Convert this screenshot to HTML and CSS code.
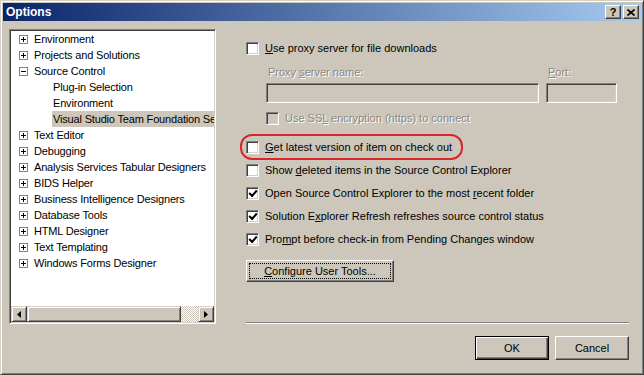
FILE: index.html
```html
<!DOCTYPE html>
<html lang="en">
<head>
    <meta charset="UTF-8">
    <title>Options</title>
    <link rel="stylesheet" href="styles.css">
</head>
<body>
    <div class="window">
        <div class="titlebar">
            <span class="title">Options</span>
            <div class="caption-btns">
                <span class="cap-btn help">?</span>
                <span class="cap-btn">
                    <svg width="8" height="7" viewBox="0 0 8 7"><path d="M0.5 0.5 L7.5 6.5 M7.5 0.5 L0.5 6.5" stroke="#000" stroke-width="1.6"/></svg>
                </span>
            </div>
        </div>

        <div class="main">
            <div class="tree">
                <ul class="tree-list">
                    <li class="node"><span class="tog plus"></span>Environment</li>
                    <li class="node"><span class="tog plus"></span>Projects and Solutions</li>
                    <li class="node"><span class="tog"></span>Source Control</li>
                    <li class="node child">Plug-in Selection</li>
                    <li class="node child">Environment</li>
                    <li class="node child selected"><span class="sel">Visual Studio Team Foundation Server</span></li>
                    <li class="node"><span class="tog plus"></span>Text Editor</li>
                    <li class="node"><span class="tog plus"></span>Debugging</li>
                    <li class="node"><span class="tog plus"></span>Analysis Services Tabular Designers</li>
                    <li class="node"><span class="tog plus"></span>BIDS Helper</li>
                    <li class="node"><span class="tog plus"></span>Business Intelligence Designers</li>
                    <li class="node"><span class="tog plus"></span>Database Tools</li>
                    <li class="node"><span class="tog plus"></span>HTML Designer</li>
                    <li class="node"><span class="tog plus"></span>Text Templating</li>
                    <li class="node"><span class="tog plus"></span>Windows Forms Designer</li>
                </ul>
                <div class="hscroll">
                    <span class="sb-btn">
                        <svg width="4" height="7" viewBox="0 0 4 7"><path d="M4 0 L0 3.5 L4 7 Z" fill="#000"/></svg>
                    </span>
                    <span class="sb-thumb"></span>
                    <span class="sb-track"></span>
                    <span class="sb-btn">
                        <svg width="4" height="7" viewBox="0 0 4 7"><path d="M0 0 L4 3.5 L0 7 Z" fill="#000"/></svg>
                    </span>
                </div>
            </div>

            <div class="settings">
                <div class="check-row proxy-row">
                    <span class="box"></span>
                    <span><u>U</u>se proxy server for file downloads</span>
                </div>

                <div class="proxy-fields">
                    <label class="disabled">Proxy <u>s</u>erver name:</label>
                    <label class="disabled"><u>P</u>ort:</label>
                    <span class="field"></span>
                    <span class="field"></span>
                </div>

                <div class="check-row ssl-row">
                    <span class="box off"></span>
                    <span class="disabled">Use SS<u>L</u> encryption (https) to connect</span>
                </div>

                <div class="check-row first-opt marked">
                    <span class="box"></span>
                    <span><u>G</u>et latest version of item on check out</span>
                </div>
                <div class="check-row">
                    <span class="box"></span>
                    <span>Show <u>d</u>eleted items in the Source Control Explorer</span>
                </div>
                <div class="check-row">
                    <span class="box checked"></span>
                    <span>Open Source Control Explorer to the most <u>r</u>ecent folder</span>
                </div>
                <div class="check-row">
                    <span class="box checked"></span>
                    <span>Solution E<u>x</u>plorer Refresh refreshes source control status</span>
                </div>
                <div class="check-row">
                    <span class="box checked"></span>
                    <span>Pro<u>m</u>pt before check-in from Pending Changes window</span>
                </div>

                <button class="btn tools-btn"><span class="focus"><u>C</u>onfigure User Tools...</span></button>

                <div class="sep"></div>
            </div>
        </div>

        <div class="actions">
            <button class="btn default">OK</button>
            <button class="btn">Cancel</button>
        </div>
    </div>
</body>
</html>
```

FILE: styles.css
```css
* {
    box-sizing: border-box;
}
body {
    margin: 0;
    font-family: "Liberation Sans", Arial, sans-serif;
    font-size: 11px;
    color: #000;
    background-color: #cdc7bb;
}
.window {
    width: 644px;
    height: 375px;
    display: flex;
    flex-direction: column;
    background-color: #cdc7bb;
    border: 1px solid;
    border-color: #d4d0c8 #404040 #404040 #d4d0c8;
    box-shadow: inset 1px 1px #fff, inset -1px -1px #808080;
    padding: 2px;
}
.titlebar {
    height: 18px;
    display: flex;
    align-items: center;
    justify-content: space-between;
    padding: 0 2px 0 3px;
    background: linear-gradient(to right, #0a246a, #a6caf0);
}
.title {
    color: #fff;
    font-weight: bold;
    font-size: 12px;
}
.caption-btns {
    display: flex;
    gap: 2px;
}
.cap-btn {
    width: 16px;
    height: 14px;
    display: flex;
    align-items: center;
    justify-content: center;
    background-color: #cdc7bb;
    border: 1px solid;
    border-color: #fff #404040 #404040 #fff;
    box-shadow: inset -1px -1px #808080;
}
.help {
    font-weight: bold;
    font-size: 11px;
    line-height: 1;
}

/* left tree */
.main {
    display: flex;
    padding: 8px 12px 0 6px;
}
.tree {
    width: 207px;
    height: 295px;
    display: flex;
    flex-direction: column;
    background-color: #fff;
    border: 1px solid;
    border-color: #808080 #fff #fff #808080;
    box-shadow: inset 1px 1px #404040, inset -1px -1px #d4d0c8;
    padding: 1px;
}
.tree-list {
    list-style: none;
    margin: 0;
    padding: 0;
    flex: 1;
    overflow: hidden;
    letter-spacing: -0.17px;
}
.node {
    height: 16px;
    display: flex;
    align-items: center;
    gap: 6px;
    padding-left: 8px;
    white-space: nowrap;
}
.node.child {
    padding-left: 42px;
}
.node.selected {
    padding-left: 41px;
}
.sel {
    flex: 1;
    height: 16px;
    line-height: 16px;
    padding-left: 1px;
    overflow: hidden;
    background-color: #cdc7bb;
}
.tog {
    width: 9px;
    height: 9px;
    flex: none;
    position: relative;
    border: 1px solid #808080;
    background-color: #fff;
}
.tog::before {
    content: "";
    position: absolute;
    left: 1px;
    top: 3px;
    width: 5px;
    height: 1px;
    background-color: #000;
}
.tog.plus::after {
    content: "";
    position: absolute;
    left: 3px;
    top: 1px;
    width: 1px;
    height: 5px;
    background-color: #000;
}
.hscroll {
    height: 16px;
    display: flex;
    flex: none;
}
.sb-btn, .sb-thumb {
    background-color: #cdc7bb;
    border: 1px solid;
    border-color: #d4d0c8 #404040 #404040 #d4d0c8;
    box-shadow: inset 1px 1px #fff, inset -1px -1px #808080;
}
.sb-btn {
    width: 16px;
    display: flex;
    align-items: center;
    justify-content: center;
}
.sb-thumb {
    width: 154px;
}
.sb-track {
    flex: 1;
    background: repeating-conic-gradient(#cdc7bb 0 25%, #fff 0 50%) 0 0 / 2px 2px;
}

/* right side options */
.settings {
    flex: 1;
    display: flex;
    flex-direction: column;
    margin-left: 17px;
    padding-left: 13px;
}
.check-row {
    height: 16px;
    display: flex;
    align-items: center;
    gap: 6px;
    margin-top: 7px;
    white-space: nowrap;
}
.proxy-row {
    margin-top: 11px;
}
.ssl-row {
    margin-top: 7px;
    padding-left: 20px;
}
.first-opt {
    margin-top: 13px;
}
.marked {
    position: relative;
}
.marked::after {
    content: "";
    position: absolute;
    left: -6px;
    top: -5px;
    width: 219px;
    height: 22px;
    border: 2px solid #d8262b;
    border-radius: 12px;
}
.box {
    width: 13px;
    height: 13px;
    flex: none;
    display: flex;
    align-items: center;
    justify-content: center;
    background-color: #fff;
    border: 1px solid;
    border-color: #808080 #fff #fff #808080;
    box-shadow: inset 1px 1px #404040, inset -1px -1px #d4d0c8;
}
.box.off {
    background-color: #cdc7bb;
}
.box.checked::after {
    content: "";
    width: 6px;
    height: 3px;
    margin-top: -2px;
    border-left: 2px solid #000;
    border-bottom: 2px solid #000;
    transform: rotate(-48deg);
}
.disabled {
    color: #8a8780;
    text-shadow: 1px 1px #fff;
}
.proxy-fields {
    display: grid;
    grid-template-columns: 273px 71px;
    column-gap: 7px;
    row-gap: 3px;
    margin-top: 8px;
    padding-left: 20px;
}
.proxy-fields label {
    height: 16px;
    line-height: 16px;
    padding-left: 2px;
}
.field {
    height: 20px;
    background-color: #cdc7bb;
    border: 1px solid;
    border-color: #808080 #fff #fff #808080;
    box-shadow: inset 1px 1px #404040, inset -1px -1px #d4d0c8;
}

/* buttons */
.btn {
    font-family: inherit;
    font-size: 11px;
    color: #000;
    background-color: #cdc7bb;
    border: 1px solid;
    border-color: #fff #404040 #404040 #fff;
    box-shadow: inset -1px -1px #808080;
    padding: 0;
}
.tools-btn {
    width: 148px;
    height: 22px;
    margin-top: 13px;
    padding: 3px;
    display: flex;
}
.focus {
    flex: 1;
    display: flex;
    align-items: center;
    justify-content: center;
    outline: 1px dotted #000;
}
.sep {
    margin-top: auto;
    height: 2px;
    border-top: 1px solid #808080;
    border-bottom: 1px solid #fff;
}
.actions {
    display: flex;
    justify-content: flex-end;
    gap: 6px;
    padding: 12px 12px 0 0;
}
.actions .btn {
    width: 74px;
    height: 24px;
}
.btn.default {
    border: 1px solid #000;
    box-shadow: inset 1px 1px #fff, inset -1px -1px #404040, inset -2px -2px #808080;
}
```
